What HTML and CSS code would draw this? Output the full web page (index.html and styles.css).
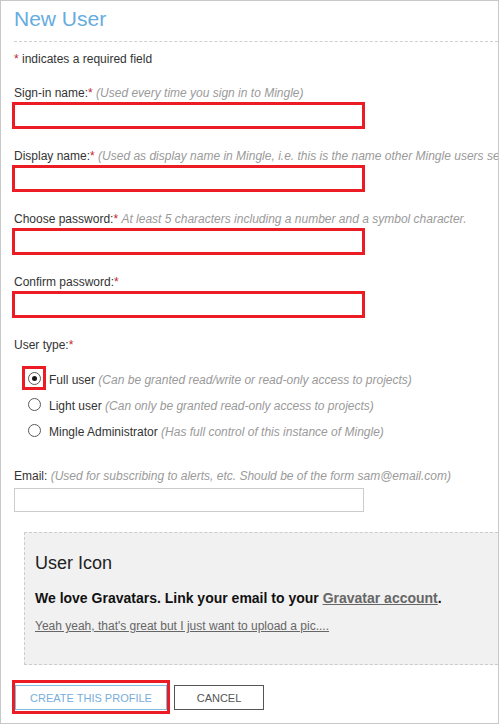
FILE: index.html
```html
<!DOCTYPE html>
<html>
<head>
<meta charset="utf-8">
<link rel="stylesheet" href="styles.css">
</head>
<body>
<div class="frame">
  <h1 class="title">New User</h1>
  <p class="note"><span class="req">*</span> indicates a required field</p>

  <div class="field first">
    <div class="label">Sign-in name:<span class="req">*</span> <span class="hint">(Used every time you sign in to Mingle)</span></div>
    <div class="input hl"></div>
  </div>
  <div class="field">
    <div class="label">Display name:<span class="req">*</span> <span class="hint">(Used as display name in Mingle, i.e. this is the name other Mingle users see)</span></div>
    <div class="input hl"></div>
  </div>
  <div class="field">
    <div class="label">Choose password:<span class="req">*</span> <span class="hint">At least 5 characters including a number and a symbol character.</span></div>
    <div class="input hl"></div>
  </div>
  <div class="field">
    <div class="label">Confirm password:<span class="req">*</span></div>
    <div class="input hl"></div>
  </div>

  <div class="field">
    <div class="label">User type:<span class="req">*</span></div>
    <div class="radios">
      <div class="radio-row">
        <span class="rwrap marked"><span class="radio checked"></span></span>
        <span class="rtext">Full user <span class="hint">(Can be granted read/write or read-only access to projects)</span></span>
      </div>
      <div class="radio-row">
        <span class="rwrap"><span class="radio"></span></span>
        <span class="rtext">Light user <span class="hint">(Can only be granted read-only access to projects)</span></span>
      </div>
      <div class="radio-row">
        <span class="rwrap"><span class="radio"></span></span>
        <span class="rtext">Mingle Administrator <span class="hint">(Has full control of this instance of Mingle)</span></span>
      </div>
    </div>
  </div>

  <div class="field email">
    <div class="label">Email: <span class="hint">(Used for subscribing to alerts, etc. Should be of the form sam@email.com)</span></div>
    <div class="input plain"></div>
  </div>

  <div class="iconbox">
    <h2 class="icon-title">User Icon</h2>
    <p class="grav">We love Gravatars. Link your email to your <a class="link" href="#">Gravatar account</a>.</p>
    <p class="upload"><a class="ulink" href="#">Yeah yeah, that's great but I just want to upload a pic....</a></p>
  </div>

  <div class="actions">
    <span class="bwrap"><span class="btn create">CREATE THIS PROFILE</span></span>
    <span class="btn cancel">CANCEL</span>
  </div>
</div>
</body>
</html>
```

FILE: styles.css
```css
html, body {
  margin: 0;
  padding: 0;
  background: #fff;
}
body {
  font-family: "Liberation Sans", Arial, sans-serif;
  color: #333;
}
.frame {
  box-sizing: border-box;
  width: 499px;
  height: 724px;
  border: 1px solid #c8c8c8;
  padding: 6px 0 0 13px;
  overflow: hidden;
  white-space: nowrap;
}
.title {
  margin: 0;
  font-size: 21px;
  line-height: 24px;
  font-weight: normal;
  color: #66ace0;
  padding-bottom: 10px;
  border-bottom: 1px dashed #cfcfcf;
}
.note {
  margin: 10px 0 0;
  font-size: 12px;
  line-height: 14px;
  color: #333;
}
.req { color: #c0262d; }
.hint { color: #9a9a9a; font-style: italic; }
.field { margin-top: 20px; }
.field.first { margin-top: 20px; }
.label {
  font-size: 12px;
  line-height: 14px;
  color: #333;
}
.input {
  box-sizing: border-box;
  background: #fff;
}
.input.hl {
  margin: 2px 0 0 -2px;
  width: 353px;
  height: 27px;
  border: 3px solid #ec1c24;
}
.input.plain {
  margin-top: 5px;
  width: 350px;
  height: 24px;
  border: 1px solid #cccccc;
}
.radios { margin-top: 15px; padding-left: 8px; }
.radio-row {
  display: flex;
  align-items: center;
  height: 26px;
}
.rwrap {
  box-sizing: border-box;
  width: 24px;
  height: 24px;
  display: flex;
  align-items: center;
  justify-content: center;
  margin-top: -4px;
}
.rwrap.marked { border: 3px solid #ec1c24; }
.radio {
  box-sizing: border-box;
  width: 13px;
  height: 13px;
  border: 1px solid #5a5a5a;
  border-radius: 50%;
  background: #fff;
  display: flex;
  align-items: center;
  justify-content: center;
}
.radio.checked::after {
  content: "";
  width: 5px;
  height: 5px;
  border-radius: 50%;
  background: #1a1a1a;
}
.rtext {
  margin-left: 3px;
  font-size: 12px;
  line-height: 14px;
  color: #333;
}
.field.email { margin-top: 24px; }
.iconbox {
  margin: 20px -10px 0 10px;
  background: #f1f1f1;
  border: 1px dashed #cccccc;
  padding: 19px 10px 31px 10px;
}
.icon-title {
  margin: 0;
  font-size: 18px;
  line-height: 22px;
  font-weight: normal;
  color: #222;
}
.grav {
  margin: 16px 0 0;
  font-size: 14px;
  line-height: 16px;
  font-weight: bold;
  color: #111;
}
.link { color: #666; text-decoration: underline; }
.upload {
  margin: 13px 0 0;
  font-size: 12px;
  line-height: 14px;
}
.ulink { color: #666; text-decoration: underline; }
.actions {
  margin: 15px 0 0 -2px;
  display: flex;
  align-items: flex-start;
}
.bwrap {
  box-sizing: border-box;
  display: flex;
  border: 3px solid #ec1c24;
  padding: 2px 0 1px 0;
  width: 158px;
  height: 34px;
}
.btn {
  box-sizing: border-box;
  display: flex;
  align-items: center;
  justify-content: center;
  font-size: 11px;
  height: 25px;
  background: #fff;
}
.btn.create {
  width: 152px;
  border: 1px solid #80bddc;
  color: #78aedb;
}
.btn.cancel {
  margin: 5px 0 0 4px;
  width: 90px;
  border: 1px solid #555;
  color: #555;
}
```
